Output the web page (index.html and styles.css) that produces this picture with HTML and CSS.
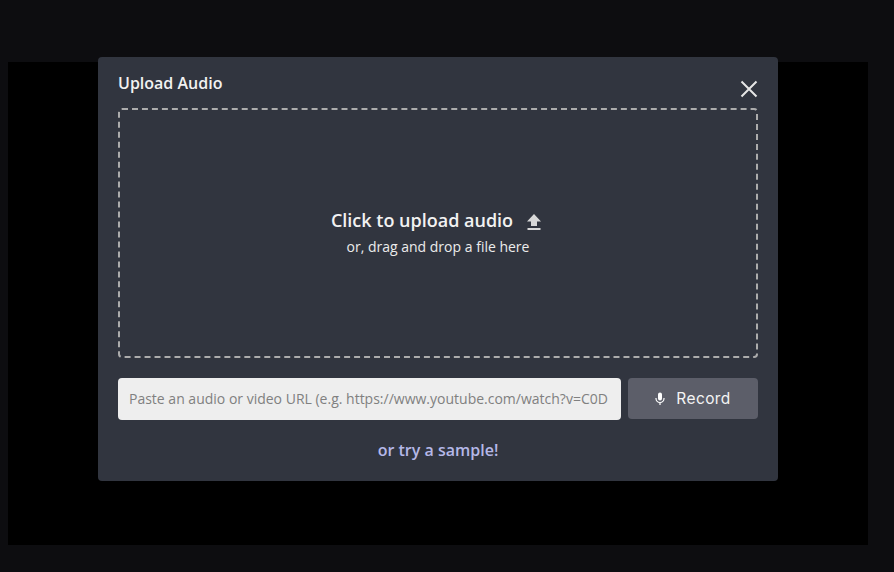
FILE: index.html
```html
<!DOCTYPE html>
<html lang="en">
<head>
  <meta charset="UTF-8" />
  <title>Upload Audio</title>
  <link rel="stylesheet" href="styles.css">
</head>
<body>
  <div class="stage">
    <div class="overlay">
      <div class="modal">
        <div class="modal-header">
          <h2>Upload Audio</h2>
          <button class="close-button" aria-label="Close">
            <svg width="18" height="18" viewBox="0 0 18 18"><path d="M1.5 1.5 L16.5 16.5 M16.5 1.5 L1.5 16.5" /></svg>
          </button>
        </div>

        <div class="dropzone">
          <div class="drop-title">
            Click to upload audio
            <svg class="upload-icon" width="16" height="18" viewBox="0 0 16 18"><path d="M8 1 L15 8.5 H11 V13 H5 V8.5 H1 Z M1.5 15 H14.5 V17 H1.5 Z" /></svg>
          </div>
          <div class="drop-sub">or, drag and drop a file here</div>
        </div>

        <div class="url-row">
          <input class="url-input" type="text" placeholder="Paste an audio or video URL (e.g. https://www.youtube.com/watch?v=C0DPdy98e4c)" />
          <button class="record-button">
            <svg width="10" height="14" viewBox="0 0 10 14"><path d="M5 0.5 A2 2 0 0 1 7 2.5 V6.5 A2 2 0 0 1 3 6.5 V2.5 A2 2 0 0 1 5 0.5 Z" /><path class="mic-stand" d="M1 6 V6.5 A4 4 0 0 0 9 6.5 V6 M5 10.5 V13" /></svg>
            Record
          </button>
        </div>

        <div class="sample-link">or try a sample!</div>
      </div>
    </div>
  </div>
</body>
</html>
```

FILE: styles.css
```css
html, body {
  height: 100%;
}

body {
  margin: 0;
  background: #0d0d10;
  font-family: 'Open Sans', sans-serif;
  overflow: hidden;
}

.stage {
  position: relative;
  width: 860px;
  height: 483px;
  margin: 62px 0 0 8px;
  background: #000;
}

.overlay {
  position: absolute;
  top: -5px;
  left: 0;
  right: 0;
  display: flex;
  justify-content: center;
}

.modal {
  box-sizing: border-box;
  width: 680px;
  height: 424px;
  padding: 0 20px;
  background: #31353f;
  border-radius: 4px;
}

.modal-header {
  display: flex;
  justify-content: space-between;
  height: 51px;
}

.modal-header h2 {
  margin: 15px 0 0;
  font-size: 16px;
  line-height: 22px;
  font-weight: 600;
  color: #f2f2f2;
}

.close-button {
  width: 18px;
  height: 18px;
  margin: 23px 0 0;
  padding: 0;
  border: none;
  background: none;
  cursor: pointer;
}

.close-button svg {
  display: block;
  fill: none;
  stroke: #e6e6e6;
  stroke-width: 2;
}

.dropzone {
  box-sizing: border-box;
  height: 250px;
  padding-bottom: 2px;
  display: flex;
  flex-direction: column;
  align-items: center;
  justify-content: center;
  border: 2px dashed #acacac;
  border-radius: 4px;
  color: #f2f2f2;
  cursor: pointer;
}

.drop-title {
  display: flex;
  align-items: center;
  gap: 13px;
  margin-right: 3px;
  font-size: 18px;
  line-height: 26px;
  font-weight: 600;
}

.upload-icon {
  fill: #d8d8d8;
  margin-top: 3px;
}

.drop-sub {
  font-size: 14px;
  line-height: 20px;
  margin-top: 4px;
  color: #ececec;
}

.url-row {
  display: flex;
  gap: 7px;
  margin-top: 20px;
}

.url-input {
  box-sizing: border-box;
  flex: 1;
  min-width: 0;
  height: 42px;
  padding: 0 13px 2px 11px;
  border: none;
  border-radius: 4px;
  background: #eeeeee;
  font-family: 'Open Sans', sans-serif;
  font-size: 14px;
}

.url-input::placeholder {
  color: #808080;
  opacity: 1;
}

.record-button {
  width: 130px;
  height: 41px;
  display: flex;
  align-items: center;
  justify-content: center;
  gap: 11px;
  padding: 0;
  border: none;
  border-radius: 4px;
  background: #5c5e69;
  color: #f4f4f4;
  font-family: 'Inter', sans-serif;
  font-size: 15.5px;
  font-weight: 400;
  letter-spacing: 0.4px;
  cursor: pointer;
}

.record-button svg {
  fill: #fff;
}

.record-button .mic-stand {
  fill: none;
  stroke: #fff;
  stroke-width: 1.2;
}

.sample-link {
  margin-top: 19px;
  text-align: center;
  font-size: 16px;
  line-height: 22px;
  font-weight: 600;
  color: #b5b8e8;
  cursor: pointer;
}
```
